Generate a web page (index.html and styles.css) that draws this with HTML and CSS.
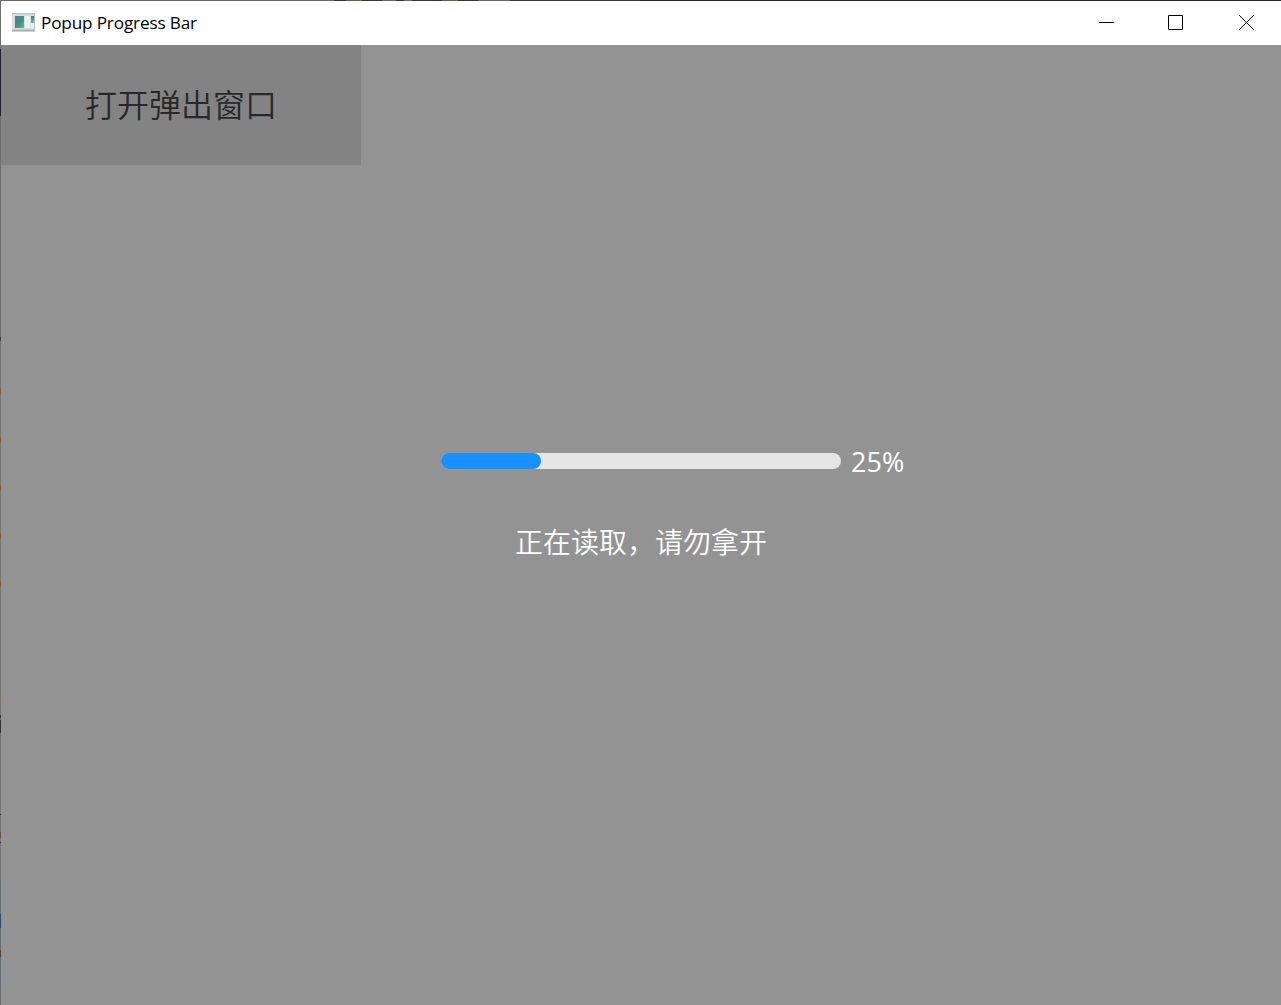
FILE: index.html
```html
<!DOCTYPE html>
<html lang="zh-CN">
<head>
<meta charset="utf-8">
<title>Popup Progress Bar</title>
<link rel="stylesheet" href="styles.css">
</head>
<body>
<div class="window">
  <header class="titlebar">
    <svg class="app-icon" width="24" height="22" viewBox="0 0 24 22">
      <defs>
        <linearGradient id="pane" x1="0" y1="0" x2="1" y2="1"><stop offset="0" stop-color="#4a7ca8"/><stop offset=".55" stop-color="#489080"/><stop offset="1" stop-color="#68b87c"/></linearGradient>
        <linearGradient id="side" x1="0" y1="0" x2="0" y2="1"><stop offset="0" stop-color="#4470b0"/><stop offset="1" stop-color="#6cc090"/></linearGradient>
      </defs>
      <rect x="0" y="1" width="23" height="18.5" fill="#d9dee1"/>
      <rect x="0" y="1" width="23" height="1.5" fill="#c3c8cc"/>
      <rect x="0" y="17.5" width="23" height="2" fill="#aab3b2"/>
      <rect x="22" y="1" width="1" height="18" fill="#b8bec2"/>
      <rect x="3" y="4" width="9" height="12" fill="url(#pane)"/>
      <rect x="13" y="4" width="5" height="12" fill="#eef0f1"/>
      <rect x="19" y="4" width="3" height="7" fill="url(#side)"/>
      <rect x="19" y="11" width="3" height="5" fill="#eef0f1"/>
    </svg>
    <h1 class="title">Popup Progress Bar</h1>
    <div class="controls">
      <svg width="15" height="15" viewBox="0 0 15 15"><path d="M0 7.5H15"/></svg>
      <svg width="15" height="15" viewBox="0 0 15 15"><path d="M.5 .5H14.5V14.5H.5Z"/></svg>
      <svg width="15" height="15" viewBox="0 0 15 15"><path d="M.2 .2L14.8 14.8M14.8 .2L.2 14.8"/></svg>
    </div>
  </header>
  <main class="content">
    <button class="open-button">打开弹出窗口</button>
    <section class="popup">
      <div class="progress">
        <div class="track"><div class="fill" style="width:25%"></div></div>
        <span class="percent">25%</span>
      </div>
      <p class="message">正在读取，请勿拿开</p>
    </section>
  </main>
</div>
</body>
</html>
```

FILE: styles.css
```css
* { box-sizing: border-box; }
body { margin: 0; background: #939393; overflow: hidden; }
.window {
  width: 1281px; height: 1005px;
  display: flex; flex-direction: column;
  padding: 1px 0 0 1px;
  background:
    linear-gradient(90deg,
      #6c6a6c 334px, #353337 334px 346px, #6c633a 346px 362px, #353337 362px 382px,
      #69676c 382px 396px, #353337 396px 404px, #69676c 404px 412px, #353337 412px 442px, #6c633a 442px 458px, #353337 458px 478px,
      #69676c 478px 510px, #353337 510px 640px, #242226 640px) 0 0 / 100% 1px no-repeat,
    linear-gradient(
      #6c6c6c 49px, #20222b 49px 116px, #6c6c6c 116px 337px, #353a48 337px 341px,
      #737373 341px 388px, #7a6238 388px 394px, #737373 394px 437px, #7a6238 437px 443px,
      #737373 443px 485px, #7a6238 485px 491px, #737373 491px 533px, #7a6238 533px 539px,
      #737373 539px 581px, #7a6238 581px 587px, #737373 587px 697px, #8a7040 697px 702px,
      #737373 702px 715px, #333 715px 718px, #737373 718px 720px, #333 720px 733px,
      #737373 733px 814px, #333 814px 815px, #737373 815px 832px, #6a5544 832px 838px,
      #737373 838px 842px, #333 842px 843px, #737373 843px 880px, #666a78 880px 914px,
      #2d4a70 914px 928px, #666a78 928px 950px, #554038 950px 957px, #666a78 957px 984px,
      #6c6c6c 984px) 0 0 / 1px 100% no-repeat;
}
.titlebar {
  height: 44px; flex: none;
  display: flex; align-items: center;
  padding: 0 27px 0 11px;
  background: #fff;
}
.app-icon { flex: none; }
.title {
  margin: 0 0 0 5px;
  font: 400 17.2px/24px "Open Sans", "Noto Sans", sans-serif;
  letter-spacing: -0.17px;
  color: #000;
}
.controls {
  margin-left: auto; padding-bottom: 1px;
  display: grid; grid-template-columns: 69px 71px 15px;
}
.controls svg { display: block; fill: none; stroke: #000; stroke-width: 1; }
.content { flex: 1; background: #939393; }
.open-button {
  display: block;
  width: 360px; height: 120px;
  padding: 0 0 5px; border: 0;
  background: #838383; color: #27282a;
  font: 350 32px/48px "Noto Sans CJK SC", sans-serif;
}
.popup {
  display: flex; flex-direction: column; align-items: center;
  padding-top: 276px;
  color: #fff;
}
.progress { display: flex; align-items: center; width: 400px; height: 40px; }
.track { flex: none; width: 400px; height: 16px; border-radius: 8px; background: #e6e6e6; }
.fill { height: 100%; border-radius: 8px; background: #1890ff; }
.percent { margin-left: 10px; padding-top: 1px; font: 400 27px/40px "Open Sans", "Noto Sans", sans-serif; }
.message {
  margin: 40px 0 0;
  font: 350 28px/40px "Noto Sans CJK SC", sans-serif;
}
```
